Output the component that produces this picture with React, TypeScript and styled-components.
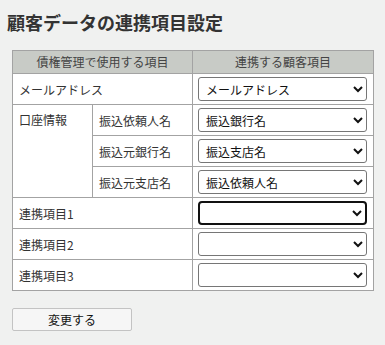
import React from "react";
import styled, { createGlobalStyle, css } from "styled-components";

const Global = createGlobalStyle`
  html, body { margin: 0; padding: 0; background: #f0f1f0; }
  body { font-family: "Noto Sans CJK JP", "Noto Sans", sans-serif; }
`;

const Page = styled.div`
  width: 385px;
  height: 345px;
  box-sizing: border-box;
  padding: 10px 12px 0 12px;
  color: #333;
`;

const Title = styled.h1`
  margin: 0 0 16px -5px;
  font-size: 18px;
  line-height: 24px;
  font-weight: bold;
  color: #333;
`;

const Table = styled.table`
  border-collapse: collapse;
  width: 361px;
  table-layout: fixed;
  background: #fff;
  font-size: 12px;
`;

const Th = styled.th`
  background: #c8cbc6;
  border: 1px solid #a3a3a3;
  height: 23px;
  padding: 0;
  font-weight: normal;
  color: #444;
  text-align: center;
  line-height: 22px;
  box-sizing: border-box;
`;

const Td = styled.td<{ $top?: boolean }>`
  border: 1px solid #a3a3a3;
  height: 31px;
  padding: 0 5px 0 6px;
  color: #333;
  vertical-align: middle;
  box-sizing: border-box;
  ${(p) =>
    p.$top &&
    css`
      vertical-align: top;
      padding-top: 6px;
    `}
`;

const SelectCell = styled.td`
  border: 1px solid #a3a3a3;
  height: 31px;
  padding: 0 5px 0 5px;
  vertical-align: middle;
  box-sizing: border-box;
`;

const Select = styled.select<{ $focused?: boolean }>`
  display: block;
  width: 169px;
  height: 24px;
  box-sizing: border-box;
  font-family: "Noto Sans CJK JP", "Noto Sans", sans-serif;
  font-size: 12px;
  color: #111;
  background: #fff;
  border: 1px solid #767676;
  border-radius: 3px;
  padding: 0 0 0 3px;
  ${(p) =>
    p.$focused &&
    css`
      border: 2px solid #111;
      border-radius: 4px;
    `}
`;

const Button = styled.button`
  margin-top: 17px;
  width: 120px;
  height: 23px;
  box-sizing: border-box;
  background: #f6f6f6;
  border: 1px solid #c3c3c3;
  border-radius: 2px;
  font-family: "Noto Sans CJK JP", "Noto Sans", sans-serif;
  font-size: 12px;
  color: #111;
  padding: 0;
`;

const Sel = ({ value, focused }: { value: string; focused?: boolean }) => (
  <Select $focused={focused} defaultValue={value}>
    <option value=""></option>
    <option value="メールアドレス">メールアドレス</option>
    <option value="振込銀行名">振込銀行名</option>
    <option value="振込支店名">振込支店名</option>
    <option value="振込依頼人名">振込依頼人名</option>
  </Select>
);

export default function App() {
  return (
    <Page>
      <Global />
      <Title>顧客データの連携項目設定</Title>
      <Table>
        <colgroup>
          <col style={{ width: 80 }} />
          <col style={{ width: 100 }} />
          <col style={{ width: 181 }} />
        </colgroup>
        <thead>
          <tr>
            <Th colSpan={2}>債権管理で使用する項目</Th>
            <Th>連携する顧客項目</Th>
          </tr>
        </thead>
        <tbody>
          <tr>
            <Td colSpan={2}>メールアドレス</Td>
            <SelectCell>
              <Sel value="メールアドレス" />
            </SelectCell>
          </tr>
          <tr>
            <Td rowSpan={3} $top>
              口座情報
            </Td>
            <Td>振込依頼人名</Td>
            <SelectCell>
              <Sel value="振込銀行名" />
            </SelectCell>
          </tr>
          <tr>
            <Td>振込元銀行名</Td>
            <SelectCell>
              <Sel value="振込支店名" />
            </SelectCell>
          </tr>
          <tr>
            <Td>振込元支店名</Td>
            <SelectCell>
              <Sel value="振込依頼人名" />
            </SelectCell>
          </tr>
          <tr>
            <Td colSpan={2}>連携項目1</Td>
            <SelectCell>
              <Sel value="" focused />
            </SelectCell>
          </tr>
          <tr>
            <Td colSpan={2}>連携項目2</Td>
            <SelectCell>
              <Sel value="" />
            </SelectCell>
          </tr>
          <tr>
            <Td colSpan={2}>連携項目3</Td>
            <SelectCell>
              <Sel value="" />
            </SelectCell>
          </tr>
        </tbody>
      </Table>
      <Button>変更する</Button>
    </Page>
  );
}
